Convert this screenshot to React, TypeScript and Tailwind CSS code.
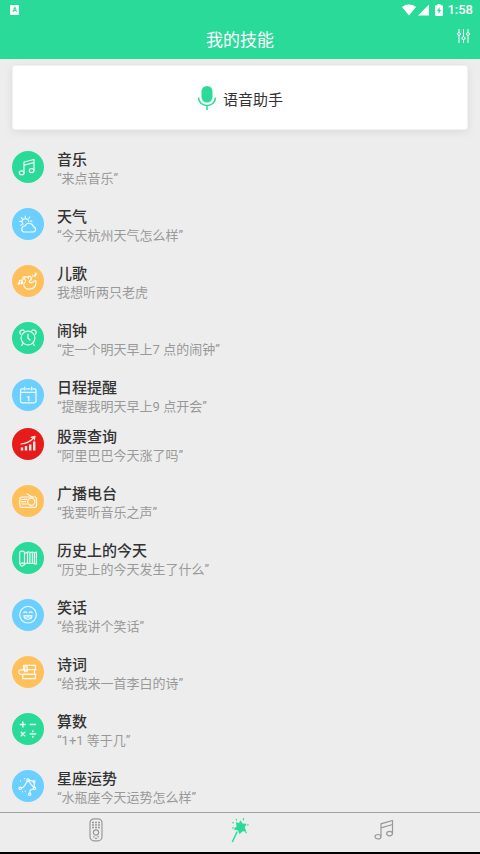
import type { ReactNode } from 'react';

type Skill = {
    title: string;
    hint: string;
    color: string;
    icon: ReactNode;
};

const GREEN = 'bg-[#2ada99]';
const BLUE = 'bg-[#6bcfff]';
const ORANGE = 'bg-[#ffc05c]';
const RED = 'bg-[#e51c1a]';

const daily: Skill[] = [
    {
        title: '音乐',
        hint: '“来点音乐”',
        color: GREEN,
        icon: (
            <>
                <path d="M12 21.5V11l10-2.5v10.8M12 14.2l10-2.5" />
                <ellipse cx="9.7" cy="21.8" rx="2.4" ry="2" />
                <ellipse cx="19.6" cy="19.6" rx="2.4" ry="2" />
            </>
        ),
    },
    {
        title: '天气',
        hint: '“今天杭州天气怎么样”',
        color: BLUE,
        icon: (
            <>
                <path d="M11.8 24h9.4a2.6 2.6 0 0 0 .4-5.1 4.6 4.6 0 0 0-8.7-.9 3.1 3.1 0 0 0-1.1 6z" />
                <path d="M11 16.2a3.3 3.3 0 1 1 5.6-2.9" />
                <path d="M13.4 8v1.6M9.3 9.6l1.1 1.2M17.8 9l-1.1 1.4M7.8 13.4h1.4M18.4 13.2h1.5M9 17.3l.9-.7" />
            </>
        ),
    },
    {
        title: '儿歌',
        hint: '我想听两只老虎',
        color: ORANGE,
        icon: (
            <>
                <path d="M12.3 13.8c.6-1.7 2.2-2.4 3.6-1.9.9-.9 2.700-.7 3.300.5.7 1.400-.3 2.600-1.300 3.300-.8.6-.6 1.900.6 2 1.500.2 2.500-.6 3.600-1.700 1.200-.9 2.200.2 2 1.700-.5 3.800-3.200 6.500-6.800 6.500-3.100 0-5.500-1.900-5.600-4.600 0-1.300.6-2.300 1.700-2.900" />
                <path d="M12.300 13.800l1.200 1.700M15.900 11.900l.6 1.500" />
                <path d="M7.400 18.600v-2.900l2.700-.7v2.800M11 14.500v-2.300l2-.6" />
                <path d="M20.800 12V9.900M23.600 10.500V8.200l1.200.8" />
                <circle cx="6.800" cy="18.600" r=".7" />
                <circle cx="9.500" cy="17.900" r=".7" />
                <circle cx="23" cy="10.600" r=".6" />
            </>
        ),
    },
    {
        title: '闹钟',
        hint: '“定一个明天早上7 点的闹钟”',
        color: GREEN,
        icon: (
            <>
                <circle cx="16" cy="16" r="6.9" />
                <path d="M16 12v4.200l2 1.800M11.200 21.200l-1.500 2.300M20.800 21.200l1.500 2.300" />
                <path d="M8.600 12.300a2.500 2.500 0 0 1 3.600-3.500M23.400 12.300a2.500 2.500 0 0 0-3.600-3.500" />
            </>
        ),
    },
    {
        title: '日程提醒',
        hint: '“提醒我明天早上9 点开会”',
        color: BLUE,
        icon: (
            <>
                <path d="M11.500 9.800H10a1.500 1.500 0 0 0-1.500 1.500v11A1.500 1.500 0 0 0 10 23.800h12.500a1.500 1.500 0 0 0 1.500-1.500v-11a1.500 1.500 0 0 0-1.500-1.500H21M14.500 9.800H18M8.500 13.300H24" />
                <path d="M12.800 8v3M19.700 8v3" />
                <text x="16.300" y="21.500" textAnchor="middle" fontSize="8" fontWeight="700" fill="currentColor" stroke="none">1</text>
            </>
        ),
    },
];

const more: Skill[] = [
    {
        title: '股票查询',
        hint: '“阿里巴巴今天涨了吗”',
        color: RED,
        icon: (
            <>
                <path d="M10 22.500v-3M14 22.500v-4.500M18.200 22.500v-6M22.200 22.500v-9" strokeWidth="2.400" strokeLinecap="butt" />
                <path d="M9 16c5-.3 9-2.200 13-6.500M19.200 9.300l3.800-1-.7 3.700" />
            </>
        ),
    },
    {
        title: '广播电台',
        hint: '“我要听音乐之声”',
        color: ORANGE,
        icon: (
            <>
                <rect x="7.800" y="12" width="16.700" height="10.300" rx="1.800" />
                <circle cx="19.200" cy="16.700" r="3.600" />
                <path d="M15 9l5.500 3M9.800 14.300h5M9.800 16.700h4M9.800 19h5" />
            </>
        ),
    },
    {
        title: '历史上的今天',
        hint: '“历史上的今天发生了什么”',
        color: GREEN,
        icon: (
            <>
                <path d="M7.700 21.800V11a1.900 1.900 0 0 1 1.900-1.900h1A1.900 1.900 0 0 1 12.500 11v10.200" />
                <path d="M12.500 21.200H9.600a1.500 1.500 0 1 0 1.500 2.300c.5-.6 1-.9 1.800-.9" />
                <path d="M12.500 11.500l3-1.500v11l-3 1M15.500 10h2.400v11.300h-2.400M17.900 11l2.500-1v11.500h-2.500M20.400 10l2 .8v10.700h-2M22.400 10.800l2-.8v12h-2" />
            </>
        ),
    },
    {
        title: '笑话',
        hint: '“给我讲个笑话”',
        color: BLUE,
        icon: (
            <>
                <circle cx="16" cy="15.700" r="8.300" />
                <path d="M11.800 13.500q1.500-1.400 3 0M17.200 13.500q1.500-1.400 3 0" />
                <path d="M12 16.500h8c0 5-8 5-8 0zM13 18h6M16 16.500V18" />
            </>
        ),
    },
    {
        title: '诗词',
        hint: '“给我来一首李白的诗”',
        color: ORANGE,
        icon: (
            <>
                <path d="M24 9.300H11.500v4.400H24M23.300 9.300v4.400" />
                <path d="M22.500 13.800v4.500H9a2.200 2.200 0 0 1 0-4.500h2.500" />
                <path d="M24 18.300H10.800v4.400H24M23.300 18.300v4.400M10.800 18.300v4.400" />
                <path d="M12.500 10.800h2.700v5l-1.300-1-1.400 1z" />
            </>
        ),
    },
    {
        title: '算数',
        hint: '“1+1 等于几”',
        color: GREEN,
        icon: (
            <>
                <path d="M8.300 11.500h5M10.800 9v5M18.200 11.500h5.300M18.200 21h5.300" strokeWidth="1.500" />
                <path d="M9.200 19.200l3.600 3.600M12.800 19.200l-3.600 3.600" strokeWidth="1.500" />
                <path d="M20.800 18v.4M20.800 23.600v.4" strokeWidth="1.700" />
            </>
        ),
    },
    {
        title: '星座运势',
        hint: '“水瓶座今天运势怎么样”',
        color: BLUE,
        icon: (
            <>
                <path d="M9.300 17.800l2.200-.6 3.900-6M17 10.300l4 .8M16.700 11.300l5.200 6.300M22.200 12.500v4.800M21.500 18.700l-3.500 1.500v3" />
                <circle cx="8.200" cy="18.300" r="1.200" />
                <circle cx="16" cy="10" r="1.200" />
                <circle cx="22" cy="11.500" r="1" />
                <circle cx="22.500" cy="18.300" r="1.200" />
                <circle cx="17.700" cy="24.200" r="1.200" />
                <path d="M8.500 10.800v.2M13.300 21v.2M10.500 21.500v.2M12.500 8.500v.2" />
            </>
        ),
    },
];

function SkillRow({ title, hint, color, icon }: Skill) {
    return (
        <li>
            <button type="button" className="flex w-full items-start gap-[13px] text-left">
                <span className={`mt-0.5 h-8 w-8 shrink-0 rounded-full text-white/90 ${color}`}>
                    <svg viewBox="0 0 32 32" className="h-8 w-8" fill="none" stroke="currentColor" strokeWidth="1.200" strokeLinecap="round" strokeLinejoin="round" aria-hidden="true">
                        {icon}
                    </svg>
                </span>
                <span className="min-w-0 pt-px">
                    <span className="block text-[15px] leading-5 font-medium text-[#333333]">{title}</span>
                    <span className="block text-[13px] leading-[18px] text-[#999999]">{hint}</span>
                </span>
            </button>
        </li>
    );
}

function StatusBar() {
    return (
        <div className="flex h-5 items-center justify-between pr-[7px] pl-2.5">
            <span className="flex h-2.5 w-[9px] items-center justify-center rounded-[1px] bg-white text-[7px] leading-none font-bold text-[#2ada99]">A</span>
            <div className="flex items-center">
                <svg viewBox="0 0 14 12" className="mr-0.5 h-3 w-3.5" fill="currentColor" aria-hidden="true">
                    <path d="M7 11.500L0 3C4-.3 10-.3 14 3z" />
                </svg>
                <svg viewBox="0 0 12 12" className="mr-[5px] h-3 w-3" fill="currentColor" aria-hidden="true">
                    <path d="M0 11.500h11V.5z" />
                </svg>
                <svg viewBox="0 0 8 12" className="mr-1 h-3 w-2" fill="currentColor" aria-hidden="true">
                    <path fillRule="evenodd" d="M2.500 0h3v1.200H7a1 1 0 0 1 1 1V11a1 1 0 0 1-1 1H1a1 1 0 0 1-1-1V2.200a1 1 0 0 1 1-1h1.500zM4.600 3L2 7h1.600v3L6.200 6H4.600z" />
                </svg>
                <span className="text-[13px] leading-5 font-medium">1:58</span>
            </div>
        </div>
    );
}

export default function App() {
    return (
        <div className="flex min-h-screen flex-col bg-[#ededed] font-[Roboto,'Noto_Sans_CJK_SC',sans-serif]">
            <header className="bg-[#2ada99] text-white">
                <StatusBar />
                <div className="relative flex h-[39px] items-center justify-center">
                    <h1 className="text-[17px] leading-6">我的技能</h1>
                    <button type="button" aria-label="设置" className="absolute top-2 right-2.5">
                        <svg viewBox="0 0 13 16" className="h-4 w-[13px]" fill="none" stroke="currentColor" strokeWidth="1" strokeLinecap="round" aria-hidden="true">
                            <path d="M2 1.500v3M2 7.500v7M6.500 1.500v7M6.500 12v2.500M11 1.500v3M11 7.500v7" />
                            <circle cx="2" cy="6" r="1.500" />
                            <circle cx="6.500" cy="10.200" r="1.500" />
                            <circle cx="11" cy="6" r="1.500" />
                        </svg>
                    </button>
                </div>
            </header>

            <main className="flex-1 px-3 pt-1.5 pb-1">
                <button type="button" className="flex h-[65px] w-full items-center justify-center gap-1.5 rounded-[3px] border border-[#f2f2f2] bg-white shadow-[0_2px_8px_rgba(0,0,0,0.08)]">
                    <svg viewBox="0 0 20 26" className="h-[26px] w-5" fill="none" aria-hidden="true">
                        <rect x="4.500" y="1" width="11" height="16.500" rx="5.500" fill="#2ada99" />
                        <path d="M1.500 12.500c0 4.700 3.600 8 8.500 8s8.500-3.300 8.500-8M10 20.500V25" stroke="#2ada99" strokeWidth="1.500" />
                    </svg>
                    <span className="pt-1 text-[15px] leading-5 text-[#333333]">语音助手</span>
                </button>

                {/* Skills */}
                <ul className="mt-[19px] flex flex-col gap-[18px]">
                    {daily.map((skill) => (
                        <SkillRow key={skill.title} {...skill} />
                    ))}
                </ul>
                <ul className="mt-2.5 flex flex-col gap-[18px]">
                    {more.map((skill) => (
                        <SkillRow key={skill.title} {...skill} />
                    ))}
                </ul>
            </main>

            {/* Tab bar */}
            <nav className="sticky bottom-0 border-t border-b-2 border-t-[#a0a0a0] border-b-black bg-[#ededed] px-6">
                <div className="grid h-[39px] grid-cols-3 text-[#999999]">
                    <button type="button" aria-label="遥控器" className="flex justify-center pt-[5px]">
                        <svg viewBox="0 0 14 24" className="h-6 w-3.5" fill="none" stroke="currentColor" strokeWidth="1.200" aria-hidden="true">
                            <rect x="1" y=".8" width="12" height="22" rx="4" />
                            <circle cx="7" cy="14.500" r="2.600" />
                            <path d="M3 4.500h8M3 7h8M3 9.500h8" strokeWidth="1.400" strokeDasharray="2 1" />
                            <path d="M4 18.800h1.500M8.500 18.800H10M6 20.300h2" />
                        </svg>
                    </button>
                    <button type="button" aria-label="技能" aria-current="page" className="flex justify-center pt-1 text-[#2ada99]">
                        <svg viewBox="0 0 18 26" className="h-[26px] w-[18px]" fill="currentColor" aria-hidden="true">
                            <path d="M9.300 3.300l2.300 3.300 4 .2-1.900 3.700 1.800 4.200-4-.5-3 3.100-1.400-3.700-4.800-1.400 3.300-2.700-.7-4.300 3.300.8z" />
                            <path d="M6.200 14.500L1.300 25" stroke="currentColor" strokeWidth="1.500" />
                            <path d="M4.800 2.200l1 1.300M12.800 1.200l-.7 2M1.200 5.500l1.700.6M16 8l1.700-.3M1.200 11.300l1.500-.7M14.500 15l1 1" stroke="currentColor" strokeWidth="1.100" />
                        </svg>
                    </button>
                    <button type="button" aria-label="音乐" className="flex justify-center pt-1.5">
                        <svg viewBox="0 0 20 22" className="h-[22px] w-5" fill="none" stroke="currentColor" strokeWidth="1.200" aria-hidden="true">
                            <path d="M7 17.500V4.800L18.500 1.500v13M7 8.800l11.500-3.300" />
                            <ellipse cx="4" cy="17.700" rx="3" ry="2.200" />
                            <ellipse cx="15.600" cy="14.600" rx="2.900" ry="2.200" />
                        </svg>
                    </button>
                </div>
            </nav>
        </div>
    );
}
